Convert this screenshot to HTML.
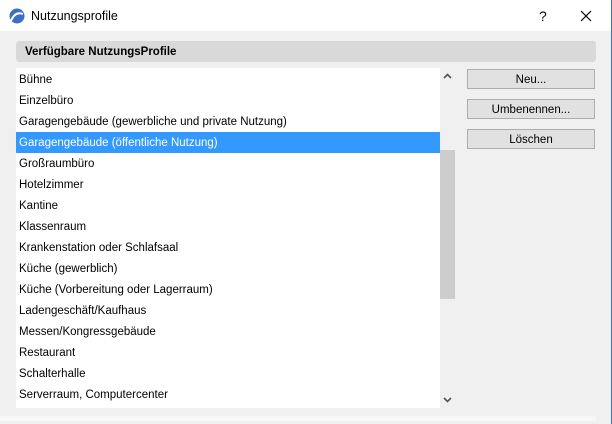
<!DOCTYPE html><html><head><style>
body{margin:0;width:612px;height:424px;background:#f0f0f0;font-family:"Liberation Sans",sans-serif;font-size:12px;color:#000;position:relative;overflow:hidden}
.t{position:absolute;left:0;top:0;width:611px;height:31px;background:#fff}
.bd{position:absolute;right:0;top:0;width:1px;height:424px;background:#2b79d0}
.h{position:absolute;left:16px;top:41px;width:580px;height:21px;background:#d9d9d9;border-radius:3px;font-weight:bold;line-height:22px;text-indent:9px;font-size:11.5px}
.l{position:absolute;left:16px;top:68px;width:424px;height:340px;background:#fff;padding-top:1px;box-sizing:border-box}
.r{height:21px;line-height:23px;padding-left:3px;font-size:11.5px;white-space:nowrap}
.s{background:#3399ff;color:#fff}
.sb{position:absolute;left:440px;top:68px;width:15px;height:340px;background:#f0f0f0}
.th{position:absolute;left:440px;top:150px;width:15px;height:149px;background:#cdcdcd}
.b{position:absolute;left:467px;width:126px;height:18px;border:1px solid #adadad;background:#e1e1e1;text-align:center;line-height:20px;font-size:11.5px}
</style></head><body>
<div class="t"></div><div class="bd"></div>
<svg style="position:absolute;left:9px;top:8px" width="16" height="16" viewBox="0 0 16 16"><circle cx="8" cy="8" r="7.5" fill="#3a6fc4"/><path d="M2 13 Q6 3 14 6" stroke="#fff" stroke-width="2" fill="none"/></svg>
<div style="position:absolute;left:31px;top:9px;font-size:12.5px">Nutzungsprofile</div>
<div style="position:absolute;left:539px;top:8px;font-size:14px">?</div>
<svg style="position:absolute;left:580px;top:10px" width="12" height="12"><path d="M1 1L11 11M11 1L1 11" stroke="#000" stroke-width="1.2"/></svg>
<div class="h">Verfügbare NutzungsProfile</div>
<div class="l">
<div class="r">Bühne</div><div class="r">Einzelbüro</div><div class="r">Garagengebäude (gewerbliche und private Nutzung)</div><div class="r s">Garagengebäude (öffentliche Nutzung)</div><div class="r">Großraumbüro</div><div class="r">Hotelzimmer</div><div class="r">Kantine</div><div class="r">Klassenraum</div><div class="r">Krankenstation oder Schlafsaal</div><div class="r">Küche (gewerblich)</div><div class="r">Küche (Vorbereitung oder Lagerraum)</div><div class="r">Ladengeschäft/Kaufhaus</div><div class="r">Messen/Kongressgebäude</div><div class="r">Restaurant</div><div class="r">Schalterhalle</div><div class="r">Serverraum, Computercenter</div>
</div>
<div class="sb"></div><div class="th"></div>
<svg style="position:absolute;left:443px;top:73px" width="9" height="6"><path d="M1 5L4.5 1.5L8 5" stroke="#555" stroke-width="1.6" fill="none"/></svg>
<svg style="position:absolute;left:443px;top:397px" width="9" height="6"><path d="M1 1L4.5 4.5L8 1" stroke="#555" stroke-width="1.6" fill="none"/></svg>
<div class="b" style="top:69px">Neu...</div>
<div class="b" style="top:99px">Umbenennen...</div>
<div class="b" style="top:129px">Löschen</div>
<div style="position:absolute;left:0;top:416px;width:596px;height:5px;background:#f7f7f7"></div>
</body></html>
